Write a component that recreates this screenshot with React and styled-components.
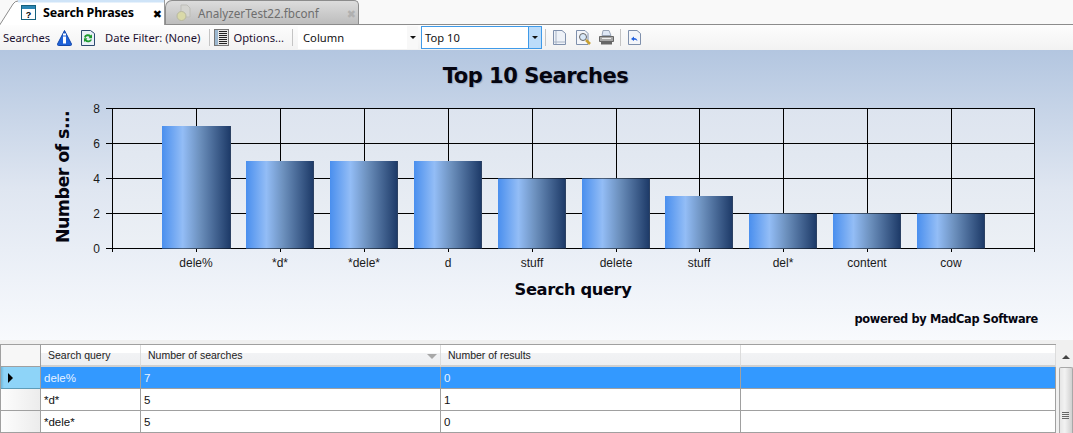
import React from 'react'
import styled, { createGlobalStyle } from 'styled-components'

const Global = createGlobalStyle`
  html, body { margin: 0; padding: 0; background: #f0f0f0; overflow: hidden; }
  body { font-family: "Noto Sans", "Liberation Sans", sans-serif; }
`

const Window = styled.div`
  width: 1073px;
  height: 433px;
  display: flex;
  flex-direction: column;
  overflow: hidden;
  font-size: 12px;
  color: #111;
`

const TabStrip = styled.div`
  height: 25px;
  display: flex;
  align-items: stretch;
  background: #f9f9f9;
  box-sizing: border-box;
  border-bottom: 1px solid #8c8c8c;
`
const ActiveTab = styled.div`
  display: flex;
  height: 25px;
  width: 165px;
  flex: none;
`
const ActiveBody = styled.div`
  flex: 1;
  display: flex;
  align-items: center;
  box-sizing: border-box;
  height: 25px;
  padding-left: 3px;
  background: linear-gradient(#cfe4f8 0, #cfe4f8 2px, #fff 3px);
  border-right: 1px solid #9a9a9a;
`
const ActiveLabel = styled.span`
  font-weight: 700;
  font-size: 12.5px;
  letter-spacing: -0.2px;
  margin-left: 7px;
  color: #000;
`
const CloseMark = styled.span`
  margin-left: auto;
  margin-right: 2px;
  margin-top: 4px;
  font-family: "DejaVu Sans", sans-serif;
  font-size: 11px;
  font-weight: 700;
  color: ${p => (p.$dim ? '#b0b0b0' : '#000')};
`
const IdleTab = styled.div`
  width: 194px;
  height: 24px;
  box-sizing: border-box;
  display: flex;
  align-items: center;
  padding-left: 10px;
  background: linear-gradient(#dcdcdc, #bdbdbd);
  border: 1px solid #8c8c8c;
  border-bottom: 0;
  border-radius: 7px 5px 0 0;
`
const IdleLabel = styled.span`
  margin-left: 6px;
  font-size: 11.7px;
  color: #6e6e6e;
`

const Toolbar = styled.div`
  height: 25px;
  flex: none;
  display: flex;
  align-items: center;
  box-sizing: border-box;
  padding-left: 3px;
  background: linear-gradient(#fdfdfd, #f2f2f2);
  color: #1c1030;
`
const ToolText = styled.span`
  font-size: 11.2px;
  margin-left: ${p => p.$left || 0}px;
  white-space: nowrap;
`
const ToolIcon = styled.svg`
  flex: none;
  margin-left: ${p => p.$left || 0}px;
`
const Separator = styled.div`
  width: 1px;
  height: 17px;
  flex: none;
  background: #c4c4c4;
  margin-left: ${p => p.$left || 0}px;
`
const Combo = styled.div`
  box-sizing: border-box;
  height: 23px;
  flex: none;
  width: ${p => p.$width}px;
  margin-left: ${p => p.$left}px;
  display: flex;
  align-items: center;
  background: #fff;
  padding-left: ${p => (p.$focused ? 3 : 5)}px;
  border: ${p => (p.$focused ? '1px solid #3f9ae8' : '0')};
  color: #111;
  font-size: 11.2px;
`
const ComboButton = styled.div`
  margin-left: auto;
  width: ${p => (p.$focused ? 12 : 11)}px;
  height: 100%;
  display: flex;
  align-items: center;
  justify-content: center;
  background: ${p => (p.$focused ? '#bcdcfa' : '#f8f8f8')};
  border-left: ${p => (p.$focused ? '1px solid #3f9ae8' : '0')};
`
const DownArrow = styled.div`
  width: 0;
  height: 0;
  border-left: 3px solid transparent;
  border-right: 3px solid transparent;
  border-top: 3px solid #111;
`

const ChartPanel = styled.div`
  height: 290px;
  flex: none;
  display: flex;
  flex-direction: column;
  background: linear-gradient(#b3c6e0 0, #dfe6f1 48%, #f8fafd 100%);
`
const ChartTitle = styled.div`
  height: 43px;
  flex: none;
  display: flex;
  align-items: center;
  justify-content: center;
  padding-right: 2px;
  padding-top: 8px;
  box-sizing: border-box;
  font-family: "DejaVu Sans", sans-serif;
  font-size: 21px;
  font-weight: 700;
  letter-spacing: -0.5px;
  color: #050510;
  text-shadow: 1px 1px 1px #9aa8bd;
`
const ChartSvg = styled.svg`
  display: block;
  flex: none;
`
const PoweredBy = styled.div`
  text-align: right;
  padding-right: 35px;
  margin-top: 9px;
  font-family: "DejaVu Sans", sans-serif;
  font-size: 11.4px;
  letter-spacing: -0.35px;
  font-weight: 700;
  color: #050510;
`

const Gap = styled.div`
  height: 4px;
  flex: none;
  background: #f0f0f0;
`

const GridArea = styled.div`
  display: flex;
  flex: 1;
  background: #f0f0f0;
`
const Grid = styled.div`
  width: 1056px;
  flex: none;
  display: grid;
  grid-template-columns: 40px 100px 300px 300px 1fr;
  grid-template-rows: repeat(4, 22px);
  background: #fff;
  border-left: 1px solid #a0a0a0;
  border-top: 1px solid #a0a0a0;
  box-sizing: border-box;
  height: 89px;
  font-family: "Liberation Sans", sans-serif;
`
const Corner = styled.div`
  background: #f7f7f7;
  border-right: 1px solid #a0a0a0;
  border-bottom: 1px solid #a0a0a0;
  box-sizing: border-box;
`
const HeadCell = styled.div`
  position: relative;
  display: flex;
  align-items: center;
  box-sizing: border-box;
  padding-left: 7px;
  background: linear-gradient(#fff 0, #fff 40%, #f2f3f5 41%, #eeeff1 100%);
  border-right: 1px solid #dcdcdc;
  border-bottom: 2px solid #d0d0d0;
  font-size: 10.5px;
  color: #222;
`
const SortArrow = styled.div`
  position: absolute;
  right: 3px;
  top: 9px;
  width: 0;
  height: 0;
  border-left: 5px solid transparent;
  border-right: 5px solid transparent;
  border-top: 5px solid #a8a8a8;
`
const RowHead = styled.div`
  box-sizing: border-box;
  display: flex;
  align-items: center;
  padding-left: 7px;
  border-right: 1px solid #a0a0a0;
  border-bottom: ${p => (p.$active ? '1px solid #5e9cb8' : '1px solid #a0a0a0')};
  background: ${p =>
    p.$active ? 'linear-gradient(90deg, #6fb6d8 0, #8ed4f8 3px)' : 'linear-gradient(90deg, #fdfdfd, #ececec)'};
`
const RowMarker = styled.div`
  width: 0;
  height: 0;
  border-top: 5px solid transparent;
  border-bottom: 5px solid transparent;
  border-left: 5px solid #000;
`
const Cell = styled.div`
  box-sizing: border-box;
  display: flex;
  align-items: center;
  padding-left: 3px;
  font-size: 11.5px;
  border-right: 1px solid #a0a0a0;
  border-bottom: 1px solid #a0a0a0;
  background: ${p => (p.$active ? '#3399ff' : '#fff')};
  color: ${p => (p.$active ? '#e8f3ff' : '#111')};
`

const ScrollBar = styled.div`
  width: 15px;
  margin-left: 2px;
  display: flex;
  flex-direction: column;
  align-items: center;
`
const ScrollUp = styled.div`
  height: 17px;
  flex: none;
  display: flex;
  align-items: center;
  justify-content: center;
  margin-top: 4px;
`
const UpArrow = styled.div`
  width: 0;
  height: 0;
  border-left: 4px solid transparent;
  border-right: 4px solid transparent;
  border-bottom: 4px solid #444;
`
const ScrollThumb = styled.div`
  flex: 1;
  width: 14px;
  margin-top: 2px;
  box-sizing: border-box;
  border: 1px solid #a8a8a8;
  border-bottom: 0;
  border-radius: 2px 2px 0 0;
  background: linear-gradient(90deg, #e6e6e6, #f2f2f2 40%, #d0d0d0);
  display: flex;
  flex-direction: column;
  align-items: center;
  padding-top: 44px;
  gap: 1px;
`
const Grip = styled.div`
  width: 7px;
  height: 1px;
  background: #666;
`

const bars = [
  ['dele%', 7, 162],
  ['*d*', 5, 246],
  ['*dele*', 5, 330],
  ['d', 5, 414],
  ['stuff', 4, 498],
  ['delete', 4, 582],
  ['stuff', 3, 665],
  ['del*', 2, 749],
  ['content', 2, 833],
  ['cow', 2, 917],
]
const rows = [
  ['dele%', '7', '0'],
  ['*d*', '5', '1'],
  ['*dele*', '5', '0'],
]

// the svg starts at y=93 of the page, so plot y values are page y - 93
const Y0 = 155
const UNIT = 17.5
const labelFont = { fontFamily: '"Liberation Sans", sans-serif', fontSize: 12, fill: '#1a1a1a' }

const Chart = () => (
  <ChartSvg width="1073" height="210" viewBox="0 0 1073 210">
    <defs>
      <linearGradient id="bar" x1="0" x2="1" y1="0" y2="0">
        <stop offset="0" stopColor="#4a8fee" />
        <stop offset="0.3" stopColor="#93bdf6" />
        <stop offset="0.55" stopColor="#6c90bd" />
        <stop offset="0.99" stopColor="#1d3a68" />
        <stop offset="1" stopColor="#555" />
      </linearGradient>
      <linearGradient id="plot" x1="0" x2="0" y1="0" y2="1">
        <stop offset="0" stopColor="#dde4ef" />
        <stop offset="1" stopColor="#ecf0f5" />
      </linearGradient>
    </defs>
    <rect x="112" y={Y0 - 140} width="922" height="140" fill="url(#plot)" />
    <g stroke="#000" strokeWidth="1" shapeRendering="crispEdges">
      {[0, 2, 4, 6, 8].map(v => (
        <line key={v} x1="106" x2="1034" y1={Y0 - v * UNIT + 0.5} y2={Y0 - v * UNIT + 0.5} />
      ))}
      <line x1="112.5" x2="112.5" y1={Y0 - 140} y2={Y0 + 4} />
      <line x1="1034.5" x2="1034.5" y1={Y0 - 140} y2={Y0 + 4} />
      {bars.map(([, , x]) => (
        <line key={x} x1={x + 34.5} x2={x + 34.5} y1={Y0 - 140} y2={Y0 + 4} />
      ))}
    </g>
    {bars.map(([name, v, x]) => (
      <g key={x}>
        <rect x={x} y={Y0 - v * UNIT + 0.5} width={x === 162 ? 69 : 68} height={v * UNIT} fill="url(#bar)" />
        <text x={x + 34} y={Y0 + 19} textAnchor="middle" {...labelFont}>{name}</text>
      </g>
    ))}
    {[0, 2, 4, 6, 8].map(v => (
      <text key={v} x="100" y={Y0 - v * UNIT + 5} textAnchor="end" {...labelFont}>{v}</text>
    ))}
    <text
      transform={`translate(69 ${Y0 - 71}) rotate(-90)`}
      textAnchor="middle"
      fontFamily='"DejaVu Sans", sans-serif'
      fontSize="17.5"
      fontWeight="700"
      letterSpacing="-0.6"
      fill="#050510"
    >
      Number of s...
    </text>
    <text
      x="573"
      y={Y0 + 47}
      textAnchor="middle"
      fontFamily='"DejaVu Sans", sans-serif'
      fontSize="16.3"
      fontWeight="700"
      letterSpacing="-0.4"
      fill="#050510"
    >
      Search query
    </text>
  </ChartSvg>
)

const HelpIcon = () => (
  <ToolIcon width="15" height="15" viewBox="0 0 15 15" $left={0}>
    <rect x="0.5" y="0.5" width="14" height="14" fill="#fff" stroke="#14607c" />
    <rect x="1" y="1" width="13" height="3" fill="#2a86b4" />
    <text x="7.5" y="12.5" textAnchor="middle" fontSize="9" fontWeight="700" fontFamily="Liberation Sans, sans-serif" fill="#000">?</text>
  </ToolIcon>
)
const FileIdleIcon = () => (
  <ToolIcon width="16" height="18" viewBox="0 0 16 18">
    <path d="M5 1h6l3 3v9H5z" fill="#d4d4d0" stroke="#bdbdb8" />
    <circle cx="5.5" cy="12" r="4.5" fill="#d9d9a8" stroke="#b8b8a0" />
  </ToolIcon>
)
const InfoIcon = () => (
  <ToolIcon width="15" height="16" viewBox="0 0 15 16" $left={7}>
    <path d="M7.5 0.5 14.5 14a1 1 0 0 1-1 1.5h-12a1 1 0 0 1-1-1.5z" fill="#1f62d8" stroke="#1548a8" />
    <rect x="6" y="6.5" width="3" height="7" fill="#fff" />
    <rect x="6" y="3.5" width="3" height="2" fill="#fff" />
  </ToolIcon>
)
const RefreshIcon = () => (
  <ToolIcon width="14" height="16" viewBox="0 0 14 16" $left={9}>
    <path d="M0.5 0.5h9l4 3v12h-13z" fill="#e9f0f8" stroke="#2c4a70" />
    <path d="M3 7a4 3.4 0 0 1 7-1.5l1-1.2v4H7.5l1.1-1.3A2.4 2.4 0 0 0 4.6 8z" fill="#1c9a2e" />
    <path d="M11 9.5a4 3.4 0 0 1-7 1.5l-1 1.2v-4h3.500l-1.100 1.300a2.400 2.400 0 0 0 4 0z" fill="#1c9a2e" />
  </ToolIcon>
)
const OptionsIcon = () => (
  <ToolIcon width="15" height="17" viewBox="0 0 15 17" $left={4}>
    <rect x="0.5" y="0.5" width="14" height="16" fill="#e8e8e8" stroke="#777" />
    <rect x="1" y="1" width="3" height="15" fill="#9cb8d0" />
    {[2, 4, 6, 8, 10, 12, 14].map(y => (
      <rect key={y} x="5" y={y} width="8" height="1" fill="#222" />
    ))}
  </ToolIcon>
)
const PageIcon = () => (
  <ToolIcon width="13" height="15" viewBox="0 0 13 15" $left={7}>
    <path d="M0.500 0.500h8.500l3.500 3v11h-12z" fill="#eef2f8" stroke="#7f90ac" />
    <path d="M3 1v13M0.500 12h12" stroke="#a8b4c6" fill="none" />
  </ToolIcon>
)
const PreviewIcon = () => (
  <ToolIcon width="17" height="16" viewBox="0 0 17 16" $left={10}>
    <path d="M0.500 0.500h8.500l3 3v11h-11.500z" fill="#f4f6fa" stroke="#7f90ac" />
    <circle cx="7" cy="7" r="3.500" fill="#d8e8f8" stroke="#666" />
    <path d="M10 10l4 4" stroke="#c8a030" strokeWidth="2.500" />
  </ToolIcon>
)
const PrinterIcon = () => (
  <ToolIcon width="15" height="15" viewBox="0 0 15 15" $left={6}>
    <path d="M4 0.500h6l2 5H3z" fill="#dfe8f6" stroke="#9aa6b8" />
    <path d="M0.500 6.500h14v5h-14z" fill="#a8a8a8" stroke="#666" />
    <path d="M2 11.500h11v3H2z" fill="#666" />
    <rect x="3" y="8" width="9" height="1" fill="#eee" />
  </ToolIcon>
)
const RestoreIcon = () => (
  <ToolIcon width="13" height="15" viewBox="0 0 13 15" $left={7}>
    <path d="M0.500 0.500h8.500l3.500 3v11h-12z" fill="#f4f6fa" stroke="#7f90ac" />
    <path d="M3 9l3-2.500v1.500c2 0 3 1 3.500 3-1-1-2-1.300-3.500-1.300V11z" fill="#2060e0" />
  </ToolIcon>
)

const App = () => (
  <Window>
    <Global />
    <TabStrip>
      <ActiveTab>
        <svg width="18" height="25" viewBox="0 0 18 25" style={{ flex: 'none' }}>
          <path d="M0 25 13 4Q15 1 18 1V25z" fill="#fff" />
          <path d="M0 24.500 13 4Q15 1 18 1" fill="none" stroke="#8c8c8c" />
        </svg>
        <ActiveBody>
          <HelpIcon />
          <ActiveLabel>Search Phrases</ActiveLabel>
          <CloseMark>✖</CloseMark>
        </ActiveBody>
      </ActiveTab>
      <IdleTab>
        <FileIdleIcon />
        <IdleLabel>AnalyzerTest22.fbconf</IdleLabel>
        <CloseMark $dim>✖</CloseMark>
      </IdleTab>
    </TabStrip>
    <Toolbar>
      <ToolText>Searches</ToolText>
      <InfoIcon />
      <RefreshIcon />
      <ToolText $left={10}>Date Filter: (None)</ToolText>
      <Separator $left={9} />
      <OptionsIcon />
      <ToolText $left={4}>Options...</ToolText>
      <Separator $left={8} />
      <Combo $left={5} $width={120}>
        Column
        <ComboButton><DownArrow /></ComboButton>
      </Combo>
      <Combo $left={3} $width={121} $focused>
        Top 10
        <ComboButton $focused><DownArrow /></ComboButton>
      </Combo>
      <Separator $left={3} />
      <PageIcon />
      <PreviewIcon />
      <PrinterIcon />
      <Separator $left={6} />
      <RestoreIcon />
    </Toolbar>
    <ChartPanel>
      <ChartTitle>Top 10 Searches</ChartTitle>
      <Chart />
      <PoweredBy>powered by MadCap Software</PoweredBy>
    </ChartPanel>
    <Gap />
    <GridArea>
      <Grid>
        <Corner />
        <HeadCell>Search query</HeadCell>
        <HeadCell>
          Number of searches
          <SortArrow />
        </HeadCell>
        <HeadCell>Number of results</HeadCell>
        <HeadCell />
        {rows.map((r, i) => (
          <React.Fragment key={r[0]}>
            <RowHead $active={i === 0}>{i === 0 && <RowMarker />}</RowHead>
            {r.map((c, j) => (
              <Cell key={j} $active={i === 0}>{c}</Cell>
            ))}
            <Cell $active={i === 0} />
          </React.Fragment>
        ))}
      </Grid>
      <ScrollBar>
        <ScrollUp><UpArrow /></ScrollUp>
        <ScrollThumb>
          <Grip /><Grip /><Grip /><Grip />
        </ScrollThumb>
      </ScrollBar>
    </GridArea>
  </Window>
)

export default App
